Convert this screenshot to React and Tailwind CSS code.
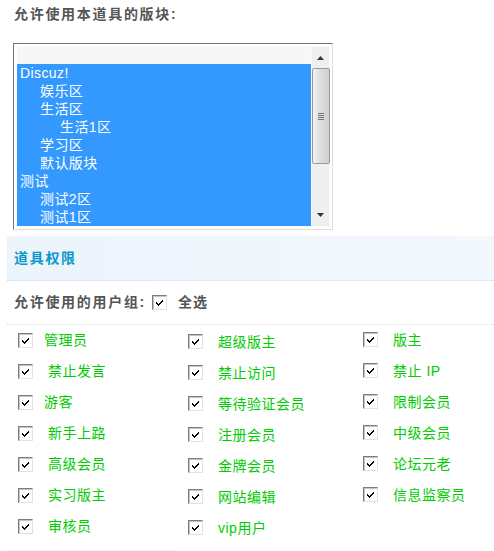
import React from 'react'

const forums = [
  { name: 'Discuz!', level: 0 },
  { name: '娱乐区', level: 1 },
  { name: '生活区', level: 1 },
  { name: '生活1区', level: 2 },
  { name: '学习区', level: 1 },
  { name: '默认版块', level: 1 },
  { name: '测试', level: 0 },
  { name: '测试2区', level: 1 },
  { name: '测试1区', level: 1 },
]

const groups = [
  ['管理员', '超级版主', '版主'],
  ['禁止发言', '禁止访问', '禁止\u00a0IP'],
  ['游客', '等待验证会员', '限制会员'],
  ['新手上路', '注册会员', '中级会员'],
  ['高级会员', '金牌会员', '论坛元老'],
  ['实习版主', '网站编辑', '信息监察员'],
  ['审核员', 'vip用户', null],
]

const tight = ['管理员', '游客']

function Check({ className = '' }) {
  return (
    <span
      className={`inline-flex h-[15px] w-[15px] shrink-0 items-center justify-center border border-t-[#7c7c7c] border-l-[#7c7c7c] border-r-[#e2e2e2] border-b-[#e2e2e2] bg-white shadow-[inset_1px_1px_0_#c4c4c4] ${className}`}
    >
      <svg width="9" height="8" viewBox="0 0 9 8" shapeRendering="crispEdges">
        <path d="M1 3h1v1h1v1h1v-1h1v-1h1v-1h1v-1h1v2h-1v1h-1v1h-1v1h-1v1h-1v-1h-1v-1h-1z" fill="#000" />
      </svg>
    </span>
  )
}

function ListBox() {
  return (
    <div className="ml-[13px] mt-[17px] flex h-[187px] w-[320px] border border-t-[#777] border-l-[#777] border-r-[#dedede] border-b-[#dedede] pb-[2px] pl-[3px] pr-[2px] pt-[2px]">
      <div className="flex-1 overflow-hidden">
        <div className="h-[18px] bg-[#f7f7f7]" />
        {forums.map((f) => (
          <div
            key={f.name}
            className={`h-[18px] bg-[#3399ff] pl-[3px] leading-[18px] text-white tracking-[0.4px] ${
              f.level === 1 ? 'pl-[23px]' : f.level === 2 ? 'pl-[43px]' : ''
            }`}
          >
            {f.name}
          </div>
        ))}
      </div>
      <div className="flex w-[19px] flex-col items-center border border-[#f8f8f8] bg-[#efefef]">
        <div className="flex h-[21px] items-center justify-center">
          <svg width="7" height="4" viewBox="0 0 7 4"><path d="M3.5 0L7 4H0z" fill="#333" /></svg>
        </div>
        <div className="flex h-[96px] w-[18px] items-center justify-center rounded-[2px] border border-[#999] bg-gradient-to-r from-[#f2f2f2] via-[#dcdcdc] to-[#cfcfcf]">
          <div className="flex flex-col gap-[1px]">
            <span className="h-[1px] w-[6px] bg-[#777]" />
            <span className="h-[1px] w-[6px] bg-[#777]" />
            <span className="h-[1px] w-[6px] bg-[#777]" />
            <span className="h-[1px] w-[6px] bg-[#777]" />
          </div>
        </div>
        <div className="flex-1" />
        <div className="flex h-[22px] items-center justify-center">
          <svg width="7" height="4" viewBox="0 0 7 4"><path d="M0 0H7L3.5 4z" fill="#333" /></svg>
        </div>
      </div>
    </div>
  )
}

export default function App() {
  return (
    <div className="h-[551px] w-[494px] overflow-hidden bg-white font-['Liberation_Sans','Noto_Sans_CJK_SC',sans-serif] text-[14px]">
      <div className="h-[26px] pl-[14px] pt-[2px] font-bold leading-[24px] tracking-[1.7px] text-[#555]">
        允许使用本道具的版块:
      </div>

      <ListBox />

      <div className="ml-[7px] mt-[6px] flex h-[45px] items-center border-b border-dotted border-[#c9dcea] bg-gradient-to-r from-[#ecf4fc] to-[#f3f8fd] pl-[7px] font-bold tracking-[1.7px] text-[#0a98cc]">
        道具权限
      </div>

      <div className="ml-[7px] flex h-[44px] items-center border-b border-dotted border-[#dcdcdc] pl-[7px] font-bold text-[#555]">
        <span className="tracking-[1.7px]">允许使用的用户组:</span>
        <Check className="ml-[6px]" />
        <span className="ml-[11px] tracking-[1px]">全选</span>
      </div>

      <div className="grid grid-cols-[170px_175px_1fr] pl-[18px]">
        {groups.flat().map((g, i) =>
          g === null ? (
            <div key={i} />
          ) : (
            <div key={i} className="flex h-[31px] items-center text-[#00cc00] tracking-[0.5px]">
              <Check className={i % 3 === 1 ? 'mt-[2px]' : i % 3 === 2 ? '-mt-[2px]' : ''} />
              <span className={`${tight.includes(g) ? 'ml-[11px]' : 'ml-[15px]'} ${i % 3 === 1 ? 'mt-[3px]' : ''}`}>
                {g}
              </span>
            </div>
          )
        )}
      </div>

      <div className="ml-[7px] mt-[8px] w-[168px] border-t border-dotted border-[#dce6ee]" />
    </div>
  )
}
